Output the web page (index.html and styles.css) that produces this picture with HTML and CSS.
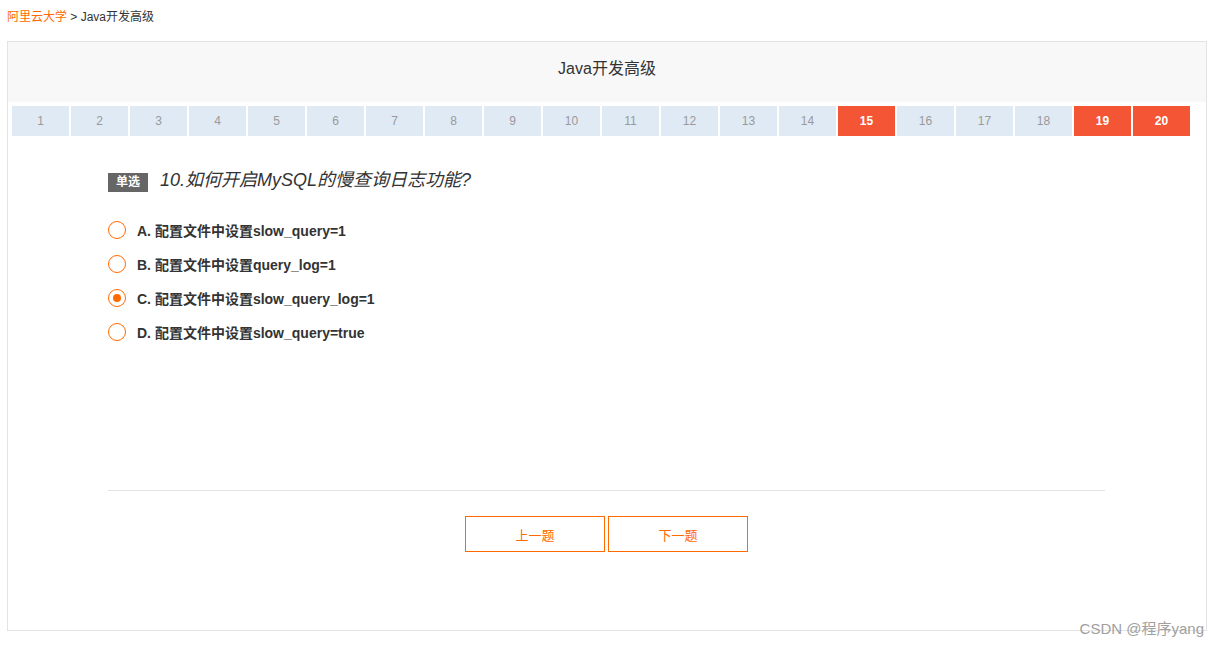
FILE: index.html
```html
<!DOCTYPE html>
<html lang="zh">
<head>
<meta charset="utf-8">
<title>Java开发高级</title>
<link rel="stylesheet" href="styles.css">
</head>
<body>
<div class="crumb"><a class="crumb-link">阿里云大学</a> &gt; Java开发高级</div>
<div class="panel">
  <div class="panel-head">Java开发高级</div>
  <div class="nums">
    <span class="num">1</span><span class="num">2</span><span class="num">3</span><span class="num">4</span><span class="num">5</span><span class="num">6</span><span class="num">7</span><span class="num">8</span><span class="num">9</span><span class="num">10</span><span class="num">11</span><span class="num">12</span><span class="num">13</span><span class="num">14</span><span class="num done">15</span><span class="num">16</span><span class="num">17</span><span class="num">18</span><span class="num done">19</span><span class="num done">20</span>
  </div>
  <div class="question">
    <div class="q-title"><span class="tag">单选</span><span class="q-text">10.如何开启MySQL的慢查询日志功能?</span></div>
    <ul class="options">
      <li class="opt"><span class="radio"></span><span class="opt-text">A. 配置文件中设置slow_query=1</span></li>
      <li class="opt"><span class="radio"></span><span class="opt-text">B. 配置文件中设置query_log=1</span></li>
      <li class="opt"><span class="radio checked"></span><span class="opt-text">C. 配置文件中设置slow_query_log=1</span></li>
      <li class="opt"><span class="radio"></span><span class="opt-text">D. 配置文件中设置slow_query=true</span></li>
    </ul>
    <div class="actions">
      <button class="btn">上一题</button>
      <button class="btn">下一题</button>
    </div>
  </div>
</div>
<div class="watermark">CSDN @程序yang</div>
</body>
</html>
```
FILE: styles.css
```css
* { box-sizing: border-box; }
html, body { margin: 0; padding: 0; background: #fff; }
body {
  font-family: "Liberation Sans", Arial, "Noto Sans CJK SC", sans-serif;
  color: #333;
  padding: 9px 12px 0 7px;
  position: relative;
  height: 646px;
}
.crumb {
  font-size: 12px;
  line-height: 17px;
  color: #333;
  height: 32px;
}
.crumb-link { color: #ff6a00; }
.panel {
  border: 1px solid #e3e3e3;
  width: 1200px;
  height: 590px;
}
.panel-head {
  background: #f8f8f8;
  height: 60px;
  line-height: 54px;
  text-align: center;
  font-size: 16px;
  color: #333;
}
.nums {
  display: flex;
  gap: 2px;
  padding: 4px 0 0 4px;
}
.num {
  width: 57px;
  height: 30px;
  line-height: 30px;
  text-align: center;
  background: #e0eaf5;
  color: #999;
  font-size: 12px;
}
.num.done {
  background: #f45535;
  color: #fff;
  font-weight: bold;
}
.question {
  margin: 0 101px 0 100px;
  padding-top: 36px;
}
.q-title {
  display: flex;
  align-items: center;
  height: 20px;
}
.tag {
  background: #666;
  color: #fff;
  font-size: 12px;
  font-weight: bold;
  width: 40px;
  height: 19px;
  line-height: 19px;
  text-align: center;
  margin-right: 12px;
}
.q-text {
  font-size: 18px;
  line-height: 20px;
  font-style: italic;
  color: #333;
  padding-bottom: 4px;
}
.options {
  list-style: none;
  margin: 0;
  padding: 21px 0 0 0;
  height: 299px;
  border-bottom: 1px solid #e3e3e3;
}
.opt {
  display: flex;
  align-items: center;
  height: 34px;
}
.radio {
  width: 18px;
  height: 18px;
  border: 1px solid #ff6a00;
  border-radius: 50%;
  margin-right: 11px;
  display: flex;
  align-items: center;
  justify-content: center;
}
.radio.checked::after {
  content: "";
  width: 8px;
  height: 8px;
  border-radius: 50%;
  background: #ff6a00;
}
.opt-text {
  font-size: 14px;
  font-weight: bold;
  color: #333;
}
.actions {
  display: flex;
  justify-content: center;
  gap: 3px;
  padding-top: 25px;
}
.btn {
  width: 140px;
  height: 36px;
  border: 1px solid #ff6a00;
  background: #fff;
  color: #ff6a00;
  font-size: 13px;
  font-family: inherit;
  padding: 0;
}
.watermark {
  position: absolute;
  right: 15px;
  top: 617px;
  font-size: 15px;
  color: #a0a0a0;
}
```
